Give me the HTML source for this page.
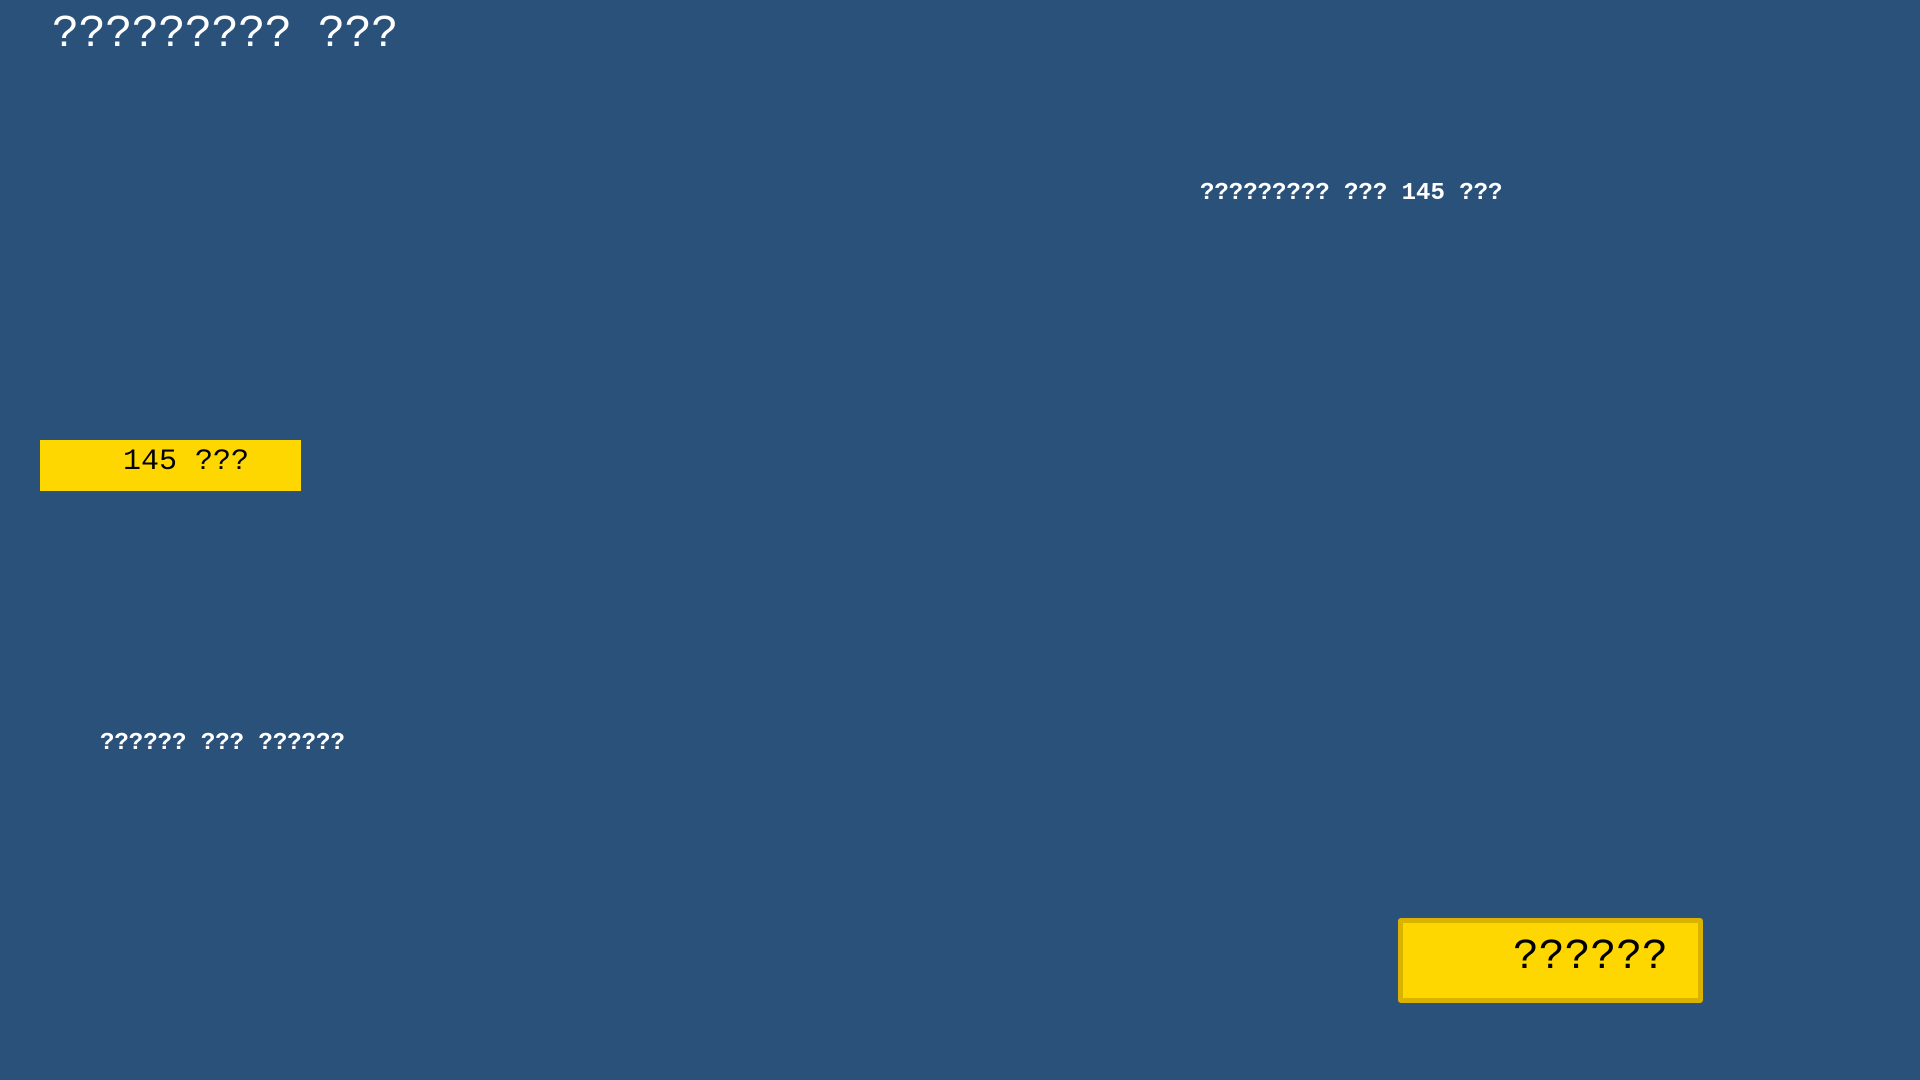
<!DOCTYPE html>
<html><head><meta charset="utf-8"><style>
html,body{margin:0;padding:0;}
body{width:1920px;height:1080px;background:#2a5179;position:relative;overflow:hidden;font-family:"Liberation Mono",monospace;}
.t{position:absolute;white-space:pre;line-height:1;}
</style></head><body>
<div class="t" style="left:52px;top:12px;font-size:45px;letter-spacing:-0.4px;color:#fff;">????????? ???</div>
<div class="t" style="left:1200px;top:182px;font-size:24px;color:#fff;font-weight:bold;">????????? ??? 145 ???</div>
<div style="position:absolute;left:40px;top:440px;width:261px;height:51px;background:#ffd700;"></div>
<div class="t" style="left:123px;top:447px;font-size:30px;color:#000;">145 ???</div>
<div class="t" style="left:100px;top:732px;font-size:24px;color:#fff;font-weight:bold;">?????? ??? ??????</div>
<div style="position:absolute;left:1398px;top:918px;width:295px;height:75px;background:#ffd700;border:5px solid #d9b300;border-radius:3px;"></div>
<div class="t" style="left:1513px;top:935px;font-size:43px;color:#000;">??????</div>
</body></html>
